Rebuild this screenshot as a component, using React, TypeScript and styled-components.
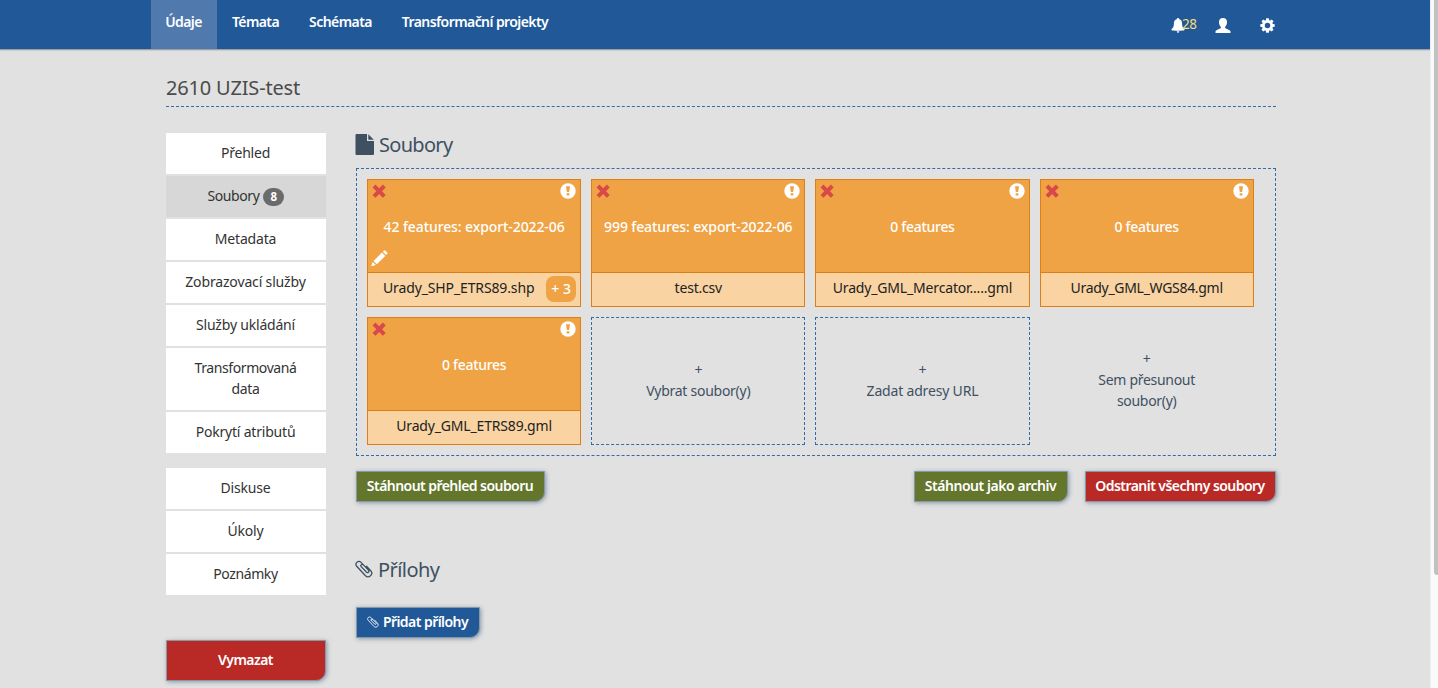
import React from 'react';
import styled, { createGlobalStyle } from 'styled-components';

const Global = createGlobalStyle`
  *, *::before, *::after { box-sizing: border-box; }
  html, body { margin: 0; padding: 0; height: 688px; overflow: hidden; background: #e1e1e1; }
  body {
    font-family: "Noto Sans", "Open Sans", sans-serif;
    font-size: 14px;
    line-height: 21px;
    color: #333;
  }
`;

const Page = styled.div`
  display: flex;
  width: 1438px;
  height: 688px;
  overflow: hidden;
`;

const Viewport = styled.div`
  flex: none;
  width: 1430px;
`;

const ScrollTrack = styled.div`
  flex: 1;
  padding-left: 3px;
  border-left: 1px solid #ededed;
  background: #fafafa;
`;

const ScrollThumb = styled.div`
  height: 575px;
  background: #c1c1c1;
  border-radius: 0 0 0 3px;
`;

const NavBar = styled.nav`
  display: flex;
  justify-content: space-between;
  height: 50px;
  padding: 0 155px 0 151px;
  background: #205898;
  border-bottom: 1px solid #999fa6;
  box-shadow: 0 1px 1px rgba(0, 0, 0, 0.08);
`;

const NavList = styled.div`
  display: flex;
`;

const NavItem = styled.a<{ $active?: boolean; $width: number; $track: number }>`
  display: flex;
  justify-content: center;
  width: ${(p) => p.$width}px;
  height: 49px;
  padding: 11px 1px 0 0;
  color: #fff;
  font-weight: 600;
  letter-spacing: ${(p) => p.$track}px;
  white-space: nowrap;
  background: ${(p) => (p.$active ? '#5079ad' : 'transparent')};
`;

const NavTools = styled.div`
  display: flex;
  align-items: flex-start;
  padding-top: 18px;
  color: #fff;

  svg { display: block; }
`;

const Notifications = styled.div`
  display: flex;
  width: 44px;
`;

const Count = styled.span`
  margin-top: -4px;
  margin-left: -3px;
  color: #f5dc7b;
  font-size: 13.5px;
  letter-spacing: -0.5px;
`;

const UserTool = styled.div`
  width: 45px;
`;

const Title = styled.h1`
  width: 1110px;
  height: 57px;
  margin: 0 0 0 166px;
  padding-top: 23px;
  border-bottom: 1px dashed #2f6ca8;
  color: #4b4b4b;
  font-size: 20px;
  font-weight: 400;
  line-height: 30px;
  letter-spacing: -0.18px;
`;

const Columns = styled.div`
  display: flex;
  gap: 30px;
  width: 1110px;
  margin: 26px 0 0 166px;
`;

const Sidebar = styled.aside`
  flex: none;
  width: 160px;
`;

const MenuGroup = styled.div`
  display: flex;
  flex-direction: column;
  gap: 2px;
  margin-bottom: 15px;
`;

const MenuItem = styled.a<{ $active?: boolean; $track?: number }>`
  display: flex;
  justify-content: center;
  padding: 9px 18px 11px 17px;
  color: #333;
  text-align: center;
  letter-spacing: ${(p) => p.$track ?? -0.2}px;
  background: ${(p) => (p.$active ? '#d7d7d7' : '#fff')};
`;

const Badge = styled.span`
  align-self: center;
  height: 18px;
  margin: 1px 0 -1px 4px;
  padding: 0 7px;
  border-radius: 9px;
  background: #6b6b6b;
  color: #fff;
  font-size: 11.5px;
  font-weight: 700;
  line-height: 18px;
`;

const Main = styled.main`
  width: 920px;
`;

const Heading = styled.h2<{ $gap: number; $track: number }>`
  display: flex;
  align-items: center;
  gap: ${(p) => p.$gap}px;
  height: 24px;
  margin: 0 0 0 -1px;
  padding-bottom: 2px;
  color: #3f5061;
  font-size: 20px;
  font-weight: 400;
  letter-spacing: ${(p) => p.$track}px;
`;

const DropZone = styled.section`
  display: grid;
  grid-template-columns: repeat(4, 214.2px);
  grid-auto-rows: 128px;
  gap: 10px;
  margin-top: 11px;
  padding: 10px;
  border: 1px dashed #2f6ca8;
`;

const Card = styled.article`
  display: flex;
  flex-direction: column;
  border: 1px solid #db7f16;
  background: #efa344;
`;

const CardBody = styled.div`
  display: flex;
  flex-direction: column;
  justify-content: space-between;
  height: 92px;
  padding: 3px 4px 6px;
`;

const CardTop = styled.div`
  display: flex;
  justify-content: space-between;

  svg { display: block; }
  svg:first-child { margin-top: 1px; }
`;

const CardTitle = styled.div<{ $track: number }>`
  margin: 2px 0 -2px;
  color: #fff;
  font-weight: 500;
  text-align: center;
  white-space: nowrap;
  letter-spacing: ${(p) => p.$track}px;
`;

const CardTools = styled.div`
  height: 16px;
  margin-left: -1px;

  svg { display: block; }
`;

const CardFooter = styled.div<{ $more?: boolean }>`
  display: flex;
  align-items: center;
  justify-content: ${(p) => (p.$more ? 'space-between' : 'center')};
  height: 34px;
  padding: 0 4px 4px ${(p) => (p.$more ? 15 : 4)}px;
  border-top: 1px solid #db7f16;
  background: #f9d3a1;
`;

const FileName = styled.span<{ $track: number }>`
  color: #222;
  white-space: nowrap;
  letter-spacing: ${(p) => p.$track}px;
`;

const MoreFiles = styled.span`
  width: 30px;
  height: 26px;
  margin-top: 3px;
  border-radius: 8px;
  background: #efa344;
  color: #fff;
  font-weight: 500;
  line-height: 25px;
  text-align: center;
`;

const Adder = styled.div<{ $plain?: boolean; $track?: number }>`
  display: flex;
  flex-direction: column;
  align-items: center;
  justify-content: center;
  padding: 0 50px ${(p) => (p.$plain ? 4 : 2)}px;
  border: 1px dashed ${(p) => (p.$plain ? 'transparent' : '#2f6ca8')};
  color: #3f5061;
  text-align: center;
  letter-spacing: ${(p) => p.$track ?? 0}px;
`;

const AdderLabel = styled.span<{ $wrap?: boolean }>`
  white-space: ${(p) => (p.$wrap ? 'normal' : 'nowrap')};
`;

const Actions = styled.div`
  display: flex;
  gap: 17px;
  margin-top: 15px;
  margin-bottom: 56px;
`;

const tones = { green: '#64762c', red: '#b92a27', blue: '#205898' };

const Button = styled.button<{ $tone: keyof typeof tones; $width: number; $tall?: boolean; $track?: number }>`
  display: flex;
  align-items: center;
  justify-content: center;
  gap: 4px;
  width: ${(p) => p.$width}px;
  height: ${(p) => (p.$tall ? 41 : 31)}px;
  padding: 0 1px 2px 0;
  border: 1px solid #8797a6;
  border-radius: 0 0 10px 0;
  background: ${(p) => tones[p.$tone]};
  box-shadow: 1px 1px 4px rgba(50, 80, 120, 0.5);
  color: #fff;
  font: inherit;
  font-weight: 600;
  letter-spacing: ${(p) => p.$track ?? -0.55}px;
  white-space: nowrap;
`;

const Spacer = styled.div`
  flex: 1;
`;

const DeleteSlot = styled.div`
  margin-top: 45px;
`;

const AttachSlot = styled.div`
  margin-top: 25px;
`;

const BellIcon = () => (
  <svg width="14" height="16" viewBox="0 0 14 16" fill="currentColor">
    <path d="M7 0c.7 0 1.100.5 1.100 1.100 2 .6 2.900 2.200 3 4.300.1 2.700.4 3.900 1.500 4.900.6.6 1 .9 1 1.500 0 .4-.4.6-2 .8-1.300.2-3 .2-4.600.2s-3.300 0-4.600-.2C.8 12.400.4 12.200.4 11.800c0-.6.4-.9 1-1.500C2.500 9.300 2.800 8.100 2.900 5.400c.1-2.100 1-3.700 3-4.300C5.900.5 6.300 0 7 0zM5.800 13.200h2.400c0 .9-.5 1.500-1.200 1.500s-1.200-.6-1.200-1.500z" />
  </svg>
);

const UserIcon = () => (
  <svg width="16" height="15" viewBox="0 0 16 15" fill="currentColor">
    <path d="M8 0c2.500 0 4 1.600 4 4 0 1.900-.6 3.600-1.700 4.700-.4.400-.3 1.300.2 1.600l4 2c.7.300 1 .7 1 1.400V15H.5v-1.300c0-.7.3-1.100 1-1.400l4-2c.5-.3.6-1.200.2-1.600C4.600 7.600 4 5.900 4 4c0-2.400 1.500-4 4-4z" />
  </svg>
);

const teeth = [0, 45, 90, 135, 180, 225, 270, 315];

const GearIcon = () => (
  <svg width="15" height="15" viewBox="0 0 15 15">
    <g fill="currentColor">
      {teeth.map((a) => (
        <path key={a} d="M5.700 3 6.200.3h2.600L9.300 3z" transform={`rotate(${a} 7.5 7.5)`} />
      ))}
    </g>
    <circle cx="7.500" cy="7.500" r="4.100" fill="none" stroke="currentColor" strokeWidth="2.700" />
  </svg>
);

const FileIcon = () => (
  <svg width="19" height="21" viewBox="0 0 19 21" fill="currentColor">
    <path d="M1.500 0h10.500v7H19v13q0 1-1 1H1.500Q.5 21 .5 20V1Q.5 0 1.500 0zM13.300.3 18.800 5.800H13.300z" />
  </svg>
);

const RemoveIcon = () => (
  <svg width="14" height="14" viewBox="0 0 14 14" fill="none" stroke="#d9484a" strokeWidth="4">
    <path d="M2 2 12.300 12.300M12.300 2 2 12.300" />
  </svg>
);

const AlertIcon = () => (
  <svg width="16" height="16" viewBox="0 0 16 16">
    <circle cx="8" cy="8" r="7.700" fill="#fff" />
    <path d="M6 3.300h4L9.200 9H6.800zM6.600 10.200h2.800v2.400H6.600z" fill="#efa344" />
  </svg>
);

const PencilIcon = () => (
  <svg width="17" height="17" viewBox="0 0 17 17" fill="#fff">
    <path d="M.2 16.300 1.700 11.900 4.800 14.900zM2.500 11 10.900 2.600 14.200 5.900 5.800 14.300zM11.800 1.700 13.100.5Q13.700 0 14.300.6L16.200 2.500Q16.800 3.100 16.300 3.700L15.100 5z" />
  </svg>
);

const ClipIcon = ({ size }: { size: number }) => (
  <svg width={size} height={size} viewBox="0 0 18 18" fill="none" stroke="currentColor" strokeWidth="1.300" strokeLinecap="round">
    <path d="M6.200 6.600 11.300 12c1.500 1.500 3.500-.3 2.100-1.900L6.300 2.600C3.500-.2-.9 3 1.700 6.300l8.500 9.200c3.500 3.500 8.700-1 5.500-4.800L11.500 6.200M6.200 6.600C5 5 7 3.600 8.300 4.900" />
  </svg>
);

type FileCard = { title: string; tt: number; name: string; nt: number; more?: string; edit?: boolean };

const files: FileCard[] = [
  { title: '42 features: export-2022-06', tt: -0.1, name: 'Urady_SHP_ETRS89.shp', nt: -0.13, more: '+ 3', edit: true },
  { title: '999 features: export-2022-06', tt: -0.12, name: 'test.csv', nt: -0.2 },
  { title: '0 features', tt: -0.3, name: 'Urady_GML_Mercator.....gml', nt: -0.17 },
  { title: '0 features', tt: -0.3, name: 'Urady_GML_WGS84.gml', nt: -0.3 },
  { title: '0 features', tt: -0.3, name: 'Urady_GML_ETRS89.gml', nt: -0.17 },
];

export default function App() {
  return (
    <Page>
      <Global />
      <Viewport>
        <NavBar>
          <NavList>
            <NavItem $active $width={66} $track={-0.6}>Údaje</NavItem>
            <NavItem $width={78} $track={-0.6}>Témata</NavItem>
            <NavItem $width={92} $track={-0.55}>Schémata</NavItem>
            <NavItem $width={177} $track={-0.58}>Transformační projekty</NavItem>
          </NavList>
          <NavTools>
            <Notifications>
              <BellIcon />
              <Count>28</Count>
            </Notifications>
            <UserTool><UserIcon /></UserTool>
            <GearIcon />
          </NavTools>
        </NavBar>
        <Title>2610 UZIS-test</Title>
        <Columns>
          <Sidebar>
            <MenuGroup>
              <MenuItem>Přehled</MenuItem>
              <MenuItem $active $track={-0.4}>Soubory<Badge>8</Badge></MenuItem>
              <MenuItem>Metadata</MenuItem>
              <MenuItem $track={-0.15}>Zobrazovací služby</MenuItem>
              <MenuItem>Služby ukládání</MenuItem>
              <MenuItem $track={-0.4}>Transformovaná<br />data</MenuItem>
              <MenuItem>Pokrytí atributů</MenuItem>
            </MenuGroup>
            <MenuGroup>
              <MenuItem>Diskuse</MenuItem>
              <MenuItem>Úkoly</MenuItem>
              <MenuItem $track={-0.4}>Poznámky</MenuItem>
            </MenuGroup>
            <DeleteSlot>
              <Button $tone="red" $width={160} $tall>Vymazat</Button>
            </DeleteSlot>
          </Sidebar>
          <Main>
            <Heading $gap={5} $track={-0.7}><FileIcon />Soubory</Heading>
            <DropZone>
              {files.map((f) => (
                <Card key={f.name}>
                  <CardBody>
                    <CardTop><RemoveIcon /><AlertIcon /></CardTop>
                    <CardTitle $track={f.tt}>{f.title}</CardTitle>
                    <CardTools>{f.edit && <PencilIcon />}</CardTools>
                  </CardBody>
                  <CardFooter $more={!!f.more}>
                    <FileName $track={f.nt}>{f.name}</FileName>
                    {f.more && <MoreFiles>{f.more}</MoreFiles>}
                  </CardFooter>
                </Card>
              ))}
              <Adder $track={-0.27}>
                <span>+</span>
                <AdderLabel>Vybrat soubor(y)</AdderLabel>
              </Adder>
              <Adder $track={-0.18}>
                <span>+</span>
                <AdderLabel>Zadat adresy URL</AdderLabel>
              </Adder>
              <Adder $plain $track={-0.3}>
                <span>+</span>
                <AdderLabel $wrap>Sem přesunout soubor(y)</AdderLabel>
              </Adder>
            </DropZone>
            <Actions>
              <Button $tone="green" $width={189}>Stáhnout přehled souboru</Button>
              <Spacer />
              <Button $tone="green" $width={154} $track={-0.45}>Stáhnout jako archiv</Button>
              <Button $tone="red" $width={191}>Odstranit všechny soubory</Button>
            </Actions>
            <Heading $gap={5} $track={-0.55}><ClipIcon size={18} />Přílohy</Heading>
            <AttachSlot>
              <Button $tone="blue" $width={124}><ClipIcon size={12} />Přidat přílohy</Button>
            </AttachSlot>
          </Main>
        </Columns>
      </Viewport>
      <ScrollTrack><ScrollThumb /></ScrollTrack>
    </Page>
  );
}
